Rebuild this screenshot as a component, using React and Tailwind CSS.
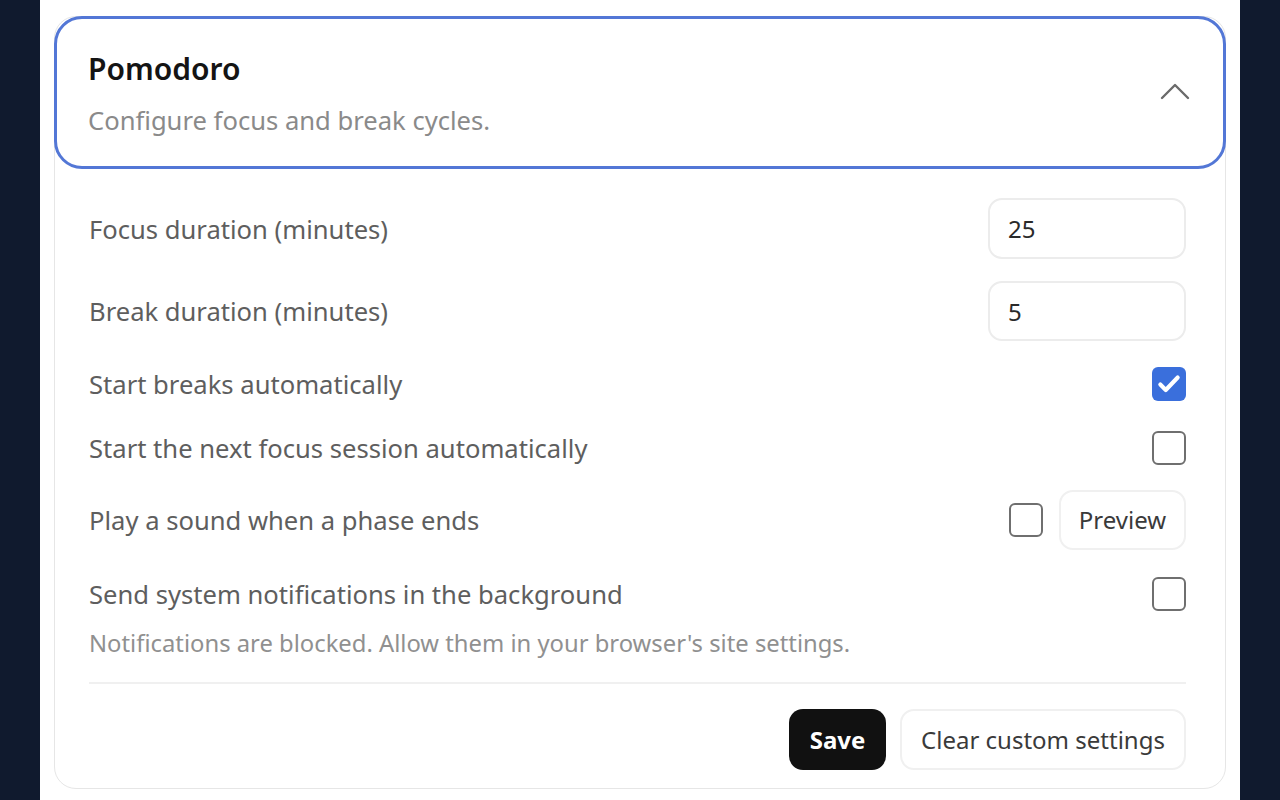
import { useState } from "react";

function Checkbox({ checked, onChange }) {
  return (
    <button
      type="button"
      onClick={() => onChange(!checked)}
      className={
        checked
          ? "w-[34px] h-[34px] rounded-[6px] bg-[#3a6fdc] flex items-center justify-center"
          : "w-[34px] h-[34px] rounded-[6px] border-2 border-[#6f6f6f] bg-white"
      }
    >
      {checked && (
        <svg width="26" height="26" viewBox="0 0 24 24" fill="none">
          <path
            d="M4 12.5l5 5L20 6"
            stroke="white"
            strokeWidth="3.8"
            strokeLinecap="round"
            strokeLinejoin="round"
          />
        </svg>
      )}
    </button>
  );
}

export default function App() {
  const [focus, setFocus] = useState("25");
  const [brk, setBrk] = useState("5");
  const [autoBreak, setAutoBreak] = useState(true);
  const [autoFocus, setAutoFocus] = useState(false);
  const [sound, setSound] = useState(false);
  const [notify, setNotify] = useState(false);

  return (
    <div
      className="min-h-screen bg-[#101a2e] flex justify-center"
      style={{ fontFamily: '"Noto Sans", "Open Sans", sans-serif' }}
    >
      <div className="w-[1200px] h-[800px] bg-white px-[14px] pt-[16px]">
        {/* Pomodoro card */}
        <div className="rounded-[22px] border border-[#e6e6e6] pb-[18px]">
          {/* Header (focused) */}
          <div className="-mx-px -mt-px h-[153px] rounded-[28px] border-[3px] border-[#5377d6] pl-[31px] pr-[32px] flex items-center justify-between">
            <div className="pt-[3px]">
              <h2 className="text-[30px] leading-[34px] font-semibold text-[#141414]">
                Pomodoro
              </h2>
              <p className="mt-[20px] text-[25.6px] leading-[30px] text-[#8a8a8a]">
                Configure focus and break cycles.
              </p>
            </div>
            <svg width="32" height="20" viewBox="0 0 32 20" fill="none" className="-mt-[4px]">
              <path
                d="M3 17L16 4l13 13"
                stroke="#6b6b6b"
                strokeWidth="2.4"
                strokeLinecap="round"
                strokeLinejoin="round"
              />
            </svg>
          </div>

          {/* Settings */}
          <div className="pl-[34px] pr-[39px] text-[25.6px] text-[#5e5e5e]">
            <div className="mt-[29px] flex items-center justify-between">
              <label className="pt-[3px]">Focus duration (minutes)</label>
              <input
                value={focus}
                onChange={(e) => setFocus(e.target.value)}
                className="w-[198px] h-[61px] rounded-[14px] border-2 border-[#ececec] px-[18px] text-[24px] text-[#2a2a2a] outline-none"
              />
            </div>

            <div className="mt-[22px] flex items-center justify-between">
              <label className="pt-[3px]">Break duration (minutes)</label>
              <input
                value={brk}
                onChange={(e) => setBrk(e.target.value)}
                className="w-[198px] h-[60px] rounded-[14px] border-2 border-[#ececec] px-[18px] text-[24px] text-[#2a2a2a] outline-none"
              />
            </div>

            <div className="mt-[26px] h-[34px] flex items-center justify-between">
              <span className="pt-[3px]">Start breaks automatically</span>
              <Checkbox checked={autoBreak} onChange={setAutoBreak} />
            </div>

            <div className="mt-[30px] h-[34px] flex items-center justify-between">
              <span className="pt-[3px]">Start the next focus session automatically</span>
              <Checkbox checked={autoFocus} onChange={setAutoFocus} />
            </div>

            <div className="mt-[25px] flex items-center justify-between">
              <span className="pt-[3px]">Play a sound when a phase ends</span>
              <div className="flex items-center gap-[16px]">
                <Checkbox checked={sound} onChange={setSound} />
                <button className="w-[127px] h-[60px] rounded-[14px] border-2 border-[#f0f0f0] text-[24px] text-[#3a3a3a]">
                  Preview
                </button>
              </div>
            </div>

            <div className="mt-[27px] h-[34px] flex items-center justify-between">
              <span className="pt-[3px]">Send system notifications in the background</span>
              <Checkbox checked={notify} onChange={setNotify} />
            </div>
            <p className="mt-[17px] text-[23.8px] leading-[30px] text-[#909090]">
              Notifications are blocked. Allow them in your browser's site settings.
            </p>

            <div className="mt-[24px] border-t-2 border-[#f0f0f0]" />

            <div className="mt-[25px] flex justify-end gap-[14px]">
              <button className="w-[97px] h-[61px] rounded-[14px] bg-[#111111] text-white text-[24px] font-bold">
                Save
              </button>
              <button className="w-[286px] h-[61px] rounded-[14px] border-2 border-[#f0f0f0] text-[24px] text-[#3a3a3a]">
                Clear custom settings
              </button>
            </div>
          </div>
        </div>
      </div>
    </div>
  );
}
